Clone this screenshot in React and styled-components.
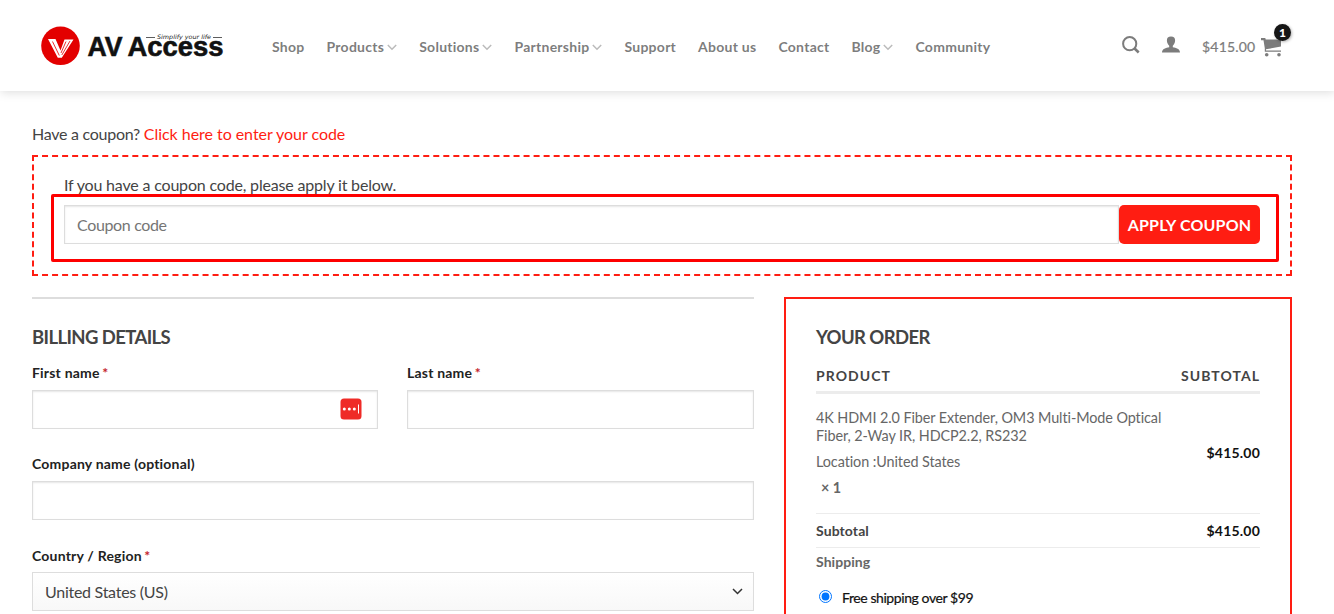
import styled, { createGlobalStyle } from 'styled-components';

const GlobalStyle = createGlobalStyle`
    * {
        box-sizing: border-box;
    }

    body {
        margin: 0;
        height: 614px;
        overflow: hidden;
        background-color: #fff;
        color: #444;
        font-family: Lato, sans-serif;
        font-size: 16px;
    }
`;

const Header = styled.header`
    display: flex;
    align-items: center;
    height: 91px;
    padding: 0 43px 0 40px;
    background-color: #fff;
    box-shadow: 1px 1px 10px rgba(0, 0, 0, 0.15);
`;

const LogoSvg = styled.svg`
    display: block;
    width: 190px;
    height: 44px;
`;

const Nav = styled.nav`
    display: flex;
    align-items: center;
    gap: 22px;
    margin: 3px 0 0 42px;
    flex: 1;
`;

const NavLink = styled.a`
    display: flex;
    align-items: center;
    gap: 3px;
    color: rgba(102, 102, 102, 0.85);
    font-size: 14px;
    font-weight: 700;
    letter-spacing: 0.26px;
    line-height: 18px;
    white-space: nowrap;
`;

const Chevron = styled.svg`
    width: 10px;
    height: 7px;
    margin-top: 1px;
    fill: none;
    stroke: #bbb;
    stroke-width: 1.5;
`;

const HeaderTools = styled.div`
    display: flex;
    align-items: center;
    color: #7c7c7c;

    svg {
        display: block;
    }
`;

const ToolIcon = styled.span`
    margin: -2px 22px 0 0;
`;

const CartTotal = styled.span`
    width: 54px;
    margin: 3px 5px 0 0;
    font-size: 14px;
    letter-spacing: 0.2px;
    line-height: 18px;
    -webkit-text-stroke: 0.2px;
`;

const Cart = styled.span`
    position: relative;
    width: 30px;
    margin-top: 3px;
`;

const CartBadge = styled.span`
    position: absolute;
    top: -13px;
    left: 13px;
    width: 17px;
    height: 17px;
    border-radius: 50%;
    background-color: #161616;
    box-shadow: 1px 1px 3px rgba(0, 0, 0, 0.3);
    color: #fff;
    font-size: 12px;
    font-weight: 900;
    line-height: 17px;
    text-align: center;
`;

const Page = styled.main`
    padding: 31px 42px 0 32px;
`;

const CouponNotice = styled.p`
    margin: 0 0 9px;
    line-height: 24px;
    letter-spacing: -0.26px;

    a {
        color: #ff1d12;
        letter-spacing: -0.04px;
    }
`;

const CouponBox = styled.section`
    position: relative;
    height: 121px;
    padding: 16px 30px;
    border: 2px dashed #ff1d12;

    p {
        margin: 0 0 8px;
        letter-spacing: -0.18px;
        line-height: 24px;
    }
`;

const CouponForm = styled.div`
    display: flex;
`;

const Highlight = styled.div`
    position: absolute;
    top: 37px;
    left: 17px;
    width: 1228px;
    height: 68px;
    border: 3px solid #fe0000;
    border-radius: 2px;
    pointer-events: none;
`;

const Input = styled.input`
    display: block;
    width: 100%;
    height: 39px;
    padding: 0 12px;
    border: 1px solid #ddd;
    border-radius: 0;
    outline: none;
    background-color: #fff;
    box-shadow: inset 0 1px 2px rgba(0, 0, 0, 0.1);
    color: #333;
    font-family: inherit;
    font-size: 16px;
    letter-spacing: -0.35px;

    &::placeholder {
        color: #757575;
    }
`;

const ApplyButton = styled.button`
    flex: 0 0 141px;
    height: 39px;
    padding: 0 0 1px;
    border: none;
    border-radius: 5px;
    background-color: #ff1d12;
    color: #fff;
    font-family: inherit;
    font-size: 16px;
    font-weight: 700;
    letter-spacing: 0.15px;
    white-space: nowrap;
`;

const Columns = styled.div`
    display: flex;
    gap: 30px;
    height: 317px;
    margin-top: 21px;
`;

const Billing = styled.section`
    width: 722px;
    padding-top: 26px;
    border-top: 2px solid #ddd;
`;

const Order = styled.section`
    width: 508px;
    padding: 26px 30px 0;
    border: 2px solid #ff1d12;
    border-bottom: none;
`;

const Title = styled.h3`
    margin: 0;
    font-size: 18.5px;
    font-weight: 700;
    letter-spacing: -0.6px;
    line-height: 24px;
    text-transform: uppercase;
`;

const Fields = styled.div`
    display: grid;
    grid-template-columns: 346px 347px;
    gap: 24px 29px;
    margin-top: 13px;
`;

const FieldWrap = styled.div`
    grid-column: ${({ $wide }) => ($wide ? '1 / -1' : 'auto')};
`;

const Label = styled.label`
    display: block;
    height: 22px;
    margin-bottom: 6px;
    padding-top: ${({ $low }) => ($low ? '1px' : '0')};
    color: #222;
    font-size: 14px;
    font-weight: 700;
    letter-spacing: 0.2px;
    line-height: 22px;

    span {
        margin-left: -1px;
        color: #c4232b;
    }
`;

const Control = styled.div`
    position: relative;
`;

const FillIcon = styled.svg`
    position: absolute;
    top: 8px;
    right: 16px;
    width: 22px;
    height: 22px;
`;

const CountrySelect = styled.div`
    display: flex;
    align-items: center;
    justify-content: space-between;
    height: 39px;
    padding: 0 10px 0 12px;
    border: 1px solid #ddd;
    background: linear-gradient(#fff, #f8f8f8);
    color: #444;
    letter-spacing: -0.27px;
`;

const OrderHead = styled.div`
    display: flex;
    justify-content: space-between;
    height: 45px;
    padding-top: 16px;
    border-bottom: 3px solid #ececec;
    font-size: 14px;
    font-weight: 700;
    letter-spacing: 1.05px;
    line-height: 22px;
    text-transform: uppercase;
`;

const OrderItem = styled.div`
    display: flex;
    align-items: center;
    justify-content: space-between;
    height: 120px;
    padding-bottom: 1px;
    border-bottom: 1px solid #ececec;
    color: #666;
    font-size: 14.4px;
    line-height: 18px;
`;

const ItemText = styled.div`
    width: 356px;
    letter-spacing: -0.08px;

    p {
        margin: 0 0 8px;
    }

    strong {
        display: block;
        padding-left: 5px;
    }
`;

const Amount = styled.span`
    color: #111;
    font-size: 14px;
    font-weight: 700;
    letter-spacing: 0.2px;
`;

const SubtotalRow = styled.div`
    display: flex;
    align-items: center;
    justify-content: space-between;
    height: 34px;
    padding-bottom: 1px;
    border-bottom: 1px solid #ececec;
    font-size: 14px;
    font-weight: 700;
    letter-spacing: 0.1px;
`;

const ShippingTitle = styled.div`
    margin-top: 4px;
    color: #666;
    font-size: 14px;
    font-weight: 700;
    letter-spacing: 0.05px;
    line-height: 20px;
`;

const ShippingOption = styled.label`
    display: flex;
    align-items: center;
    gap: 10px;
    height: 20px;
    margin-top: 15px;
    color: #111;
    font-size: 14px;
    letter-spacing: -0.42px;
    -webkit-text-stroke: 0.2px;

    input {
        width: 13px;
        height: 13px;
        margin: -2px 0 0 3px;
        accent-color: #0075ff;
    }
`;

const navItems = [
    { label: 'Shop' },
    { label: 'Products', hasMenu: true },
    { label: 'Solutions', hasMenu: true },
    { label: 'Partnership', hasMenu: true },
    { label: 'Support' },
    { label: 'About us' },
    { label: 'Contact' },
    { label: 'Blog', hasMenu: true },
    { label: 'Community' },
];

const Logo = () => (
    <LogoSvg viewBox='0 0 190 44'>
        <circle cx='20.5' cy='21.8' r='19.3' fill='#e30000' />
        <path d='M8 15H15.500L20.500 26.500 24.500 15.500H33.500L21.800 33.800H17.800Z' fill='#fff' />
        <path
            d='M12.500 17.500 19.300 31.500M30 17 21.800 31M26 17.500 21 29'
            stroke='#e30000'
            strokeWidth='0.8'
            fill='none'
        />
        <g
            fontFamily='Liberation Sans, sans-serif'
            fontSize='27'
            fontWeight='700'
            fill='#111'
            stroke='#111'
            strokeWidth='0.6'>
            <text x='47.500' y='31.800' textLength='35' lengthAdjust='spacingAndGlyphs'>
                AV
            </text>
            <text x='87.500' y='31.800' textLength='96' lengthAdjust='spacingAndGlyphs'>
                Access
            </text>
        </g>
        <path d='M106 13.500h9M173 13.500h9' stroke='#333' strokeWidth='0.8' />
        <text
            x='117'
            y='15.200'
            textLength='54'
            lengthAdjust='spacingAndGlyphs'
            fontFamily='DejaVu Sans, sans-serif'
            fontSize='6'
            fontStyle='italic'
            fill='#222'>
            Simplify your life
        </text>
    </LogoSvg>
);

const SearchIcon = () => (
    <svg width='18' height='18' viewBox='0 0 18 18' fill='none' stroke='currentColor'>
        <circle cx='7.700' cy='7.700' r='6.600' strokeWidth='2' />
        <path d='M12.300 12.300 16.700 16.500' strokeWidth='2.600' />
    </svg>
);

const UserIcon = () => (
    <svg width='18' height='17' viewBox='0 0 18 17' fill='currentColor'>
        <path d='M9 0.500C6.200 0.500 4.800 2 4.900 4.600 5 7 6 8.700 7.200 9.700V11.200C4 12 0 12.600 0 16.500H18C18 12.600 14 12 10.800 11.200V9.700C12 8.700 13 7 13.100 4.600 13.200 2 11.800 0.500 9 0.500Z' />
    </svg>
);

const CartIcon = () => (
    <svg width='21' height='20' viewBox='0 0 21 20' fill='currentColor'>
        <path d='M0 1H4.300L4.700 2.500H20V9.500L5 12.300V13.500H20V14.700H3.800V11.200L2.500 3.200H0Z' />
        <circle cx='5.700' cy='17.800' r='1.800' />
        <circle cx='18' cy='17.800' r='1.800' />
    </svg>
);

const Field = ({ label, required, wide, low, children }) => (
    <FieldWrap $wide={wide}>
        <Label $low={low}>
            {label} {required && <span>*</span>}
        </Label>
        <Control>{children}</Control>
    </FieldWrap>
);

const App = () => {
    return (
        <>
            <GlobalStyle />
            <Header>
                <Logo />
                <Nav>
                    {navItems.map(item => (
                        <NavLink key={item.label}>
                            {item.label}
                            {item.hasMenu && (
                                <Chevron viewBox='0 0 10 7'>
                                    <path d='M.8 1 5 5.200 9.200 1' />
                                </Chevron>
                            )}
                        </NavLink>
                    ))}
                </Nav>
                <HeaderTools>
                    <ToolIcon>
                        <SearchIcon />
                    </ToolIcon>
                    <ToolIcon>
                        <UserIcon />
                    </ToolIcon>
                    <CartTotal>$415.00</CartTotal>
                    <Cart>
                        <CartIcon />
                        <CartBadge>1</CartBadge>
                    </Cart>
                </HeaderTools>
            </Header>

            <Page>
                <CouponNotice>
                    Have a coupon? <a>Click here to enter your code</a>
                </CouponNotice>
                <CouponBox>
                    <p>If you have a coupon code, please apply it below.</p>
                    <CouponForm>
                        <Input placeholder='Coupon code' />
                        <ApplyButton>APPLY COUPON</ApplyButton>
                    </CouponForm>
                    <Highlight />
                </CouponBox>

                <Columns>
                    <Billing>
                        <Title>Billing details</Title>
                        <Fields>
                            <Field label='First name' required>
                                <Input />
                                <FillIcon viewBox='0 0 22 22'>
                                    <rect x='.5' y='.5' width='21' height='21' rx='3.500' fill='#ef2b27' />
                                    <g fill='#fff'>
                                        <circle cx='4.300' cy='11' r='1.500' />
                                        <circle cx='9.300' cy='11' r='1.500' />
                                        <circle cx='14.300' cy='11' r='1.500' />
                                        <rect x='18' y='6.500' width='1' height='9' />
                                    </g>
                                </FillIcon>
                            </Field>
                            <Field label='Last name' required>
                                <Input />
                            </Field>
                            <Field label='Company name (optional)' wide>
                                <Input />
                            </Field>
                            <Field label='Country / Region' required wide low>
                                <CountrySelect>
                                    United States (US)
                                    <svg width='11' height='7' viewBox='0 0 11 7' fill='none' stroke='#333' strokeWidth='1.500'>
                                        <path d='M1 1 5.500 5.500 10 1' />
                                    </svg>
                                </CountrySelect>
                            </Field>
                        </Fields>
                    </Billing>

                    <Order>
                        <Title>Your order</Title>
                        <OrderHead>
                            <span>Product</span>
                            <span>Subtotal</span>
                        </OrderHead>
                        <OrderItem>
                            <ItemText>
                                <p>4K HDMI 2.0 Fiber Extender, OM3 Multi-Mode Optical Fiber, 2-Way IR, HDCP2.2, RS232</p>
                                <p>Location :United States</p>
                                <strong>× 1</strong>
                            </ItemText>
                            <Amount>$415.00</Amount>
                        </OrderItem>
                        <SubtotalRow>
                            <span>Subtotal</span>
                            <Amount>$415.00</Amount>
                        </SubtotalRow>
                        <ShippingTitle>Shipping</ShippingTitle>
                        <ShippingOption>
                            <input type='radio' name='shipping' defaultChecked />
                            Free shipping over $99
                        </ShippingOption>
                    </Order>
                </Columns>
            </Page>
        </>
    );
};

export default App;
